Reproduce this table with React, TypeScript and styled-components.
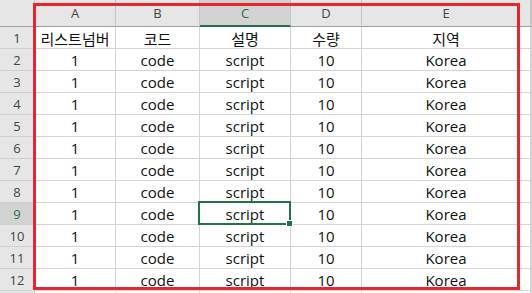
import styled, {createGlobalStyle} from "styled-components";

const GlobalStyle = createGlobalStyle`
    html, body {
        margin: 0;
        padding: 0;
        background: #ffffff;
    }
    body {
        font-family: "Open Sans", "Noto Sans CJK KR", sans-serif;
        overflow: hidden;
    }
`;

const COLUMNS = ["A", "B", "C", "D", "E"];
const HEADINGS = ["리스트넘버", "코드", "설명", "수량", "지역"];
const ROW = ["1", "code", "script", "10", "Korea"];

const SELECTED_COL = 2;
const SELECTED_ROW = 9;

const Sheet = styled.div`
    position: relative;
    width: 532px;
    height: 293px;
    overflow: hidden;
    display: grid;
    grid-template-columns: 35px 81px 84px 91px 71px 169px 1fr;
    grid-template-rows: 27px repeat(13, 22px);
    align-content: start;
`;

const Corner = styled.div`
    background: #e6e6e6;
    border-right: 1px solid #c4c4c4;
    border-bottom: 1px solid #9e9e9e;
`;

const ColHeader = styled.div<{$active?: boolean}>`
    box-sizing: border-box;
    display: flex;
    align-items: center;
    justify-content: center;
    background: ${(p) => (p.$active ? "#d2d2d2" : "#e6e6e6")};
    color: ${(p) => (p.$active ? "#217346" : "#444444")};
    font-size: 13px;
    border-right: 1px solid #c4c4c4;
    border-bottom: ${(p) => (p.$active ? "2px solid #217346" : "1px solid #9e9e9e")};
    padding-top: ${(p) => (p.$active ? "1px" : "0")};
`;

const RowHeader = styled.div<{$active?: boolean}>`
    box-sizing: border-box;
    display: flex;
    align-items: center;
    justify-content: center;
    background: ${(p) => (p.$active ? "#d2d2d2" : "#e6e6e6")};
    color: ${(p) => (p.$active ? "#217346" : "#444444")};
    font-size: 13px;
    border-right: 1px solid #c4c4c4;
    border-bottom: 1px solid #d0d0d0;
`;

const Cell = styled.div`
    box-sizing: border-box;
    display: flex;
    align-items: center;
    justify-content: center;
    padding-top: 1px;
    color: #111111;
    font-size: 15px;
    white-space: nowrap;
    border-right: 1px solid #d4d4d4;
    border-bottom: 1px solid #d4d4d4;
`;

const Frame = styled.div`
    position: absolute;
    left: 33px;
    top: 3px;
    width: 487px;
    height: 287px;
    box-sizing: border-box;
    border: 3px solid #e8242f;
    pointer-events: none;
`;

const Selection = styled.div`
    position: absolute;
    left: 198px;
    top: 201px;
    width: 93px;
    height: 24px;
    box-sizing: border-box;
    border: 2px solid #217346;
    pointer-events: none;
`;

const Handle = styled.div`
    position: absolute;
    right: -4px;
    bottom: -4px;
    width: 5px;
    height: 5px;
    background: #217346;
    border: 1px solid #ffffff;
`;

export default function App() {
    const rows = Array.from({length: 13}, (_, i) => i + 1);

    return (
        <>
            <GlobalStyle />
            <Sheet>
                <Corner />
                {COLUMNS.map((c, i) => (
                    <ColHeader key={c} $active={i === SELECTED_COL}>
                        {c}
                    </ColHeader>
                ))}
                <ColHeader />

                {rows.map((r) => (
                    <Row key={r} index={r} />
                ))}

                <Frame />
                <Selection>
                    <Handle />
                </Selection>
            </Sheet>
        </>
    );
}

// row 13 only peeks in under the frame, so it stays blank
const Row = ({index}: {index: number}) => {
    const values = index === 1 ? HEADINGS : index <= 12 ? ROW : ["", "", "", "", ""];
    return (
        <>
            <RowHeader $active={index === SELECTED_ROW}>{index <= 12 ? index : ""}</RowHeader>
            {values.map((v, i) => (
                <Cell key={i}>{v}</Cell>
            ))}
            <Cell />
        </>
    );
};
